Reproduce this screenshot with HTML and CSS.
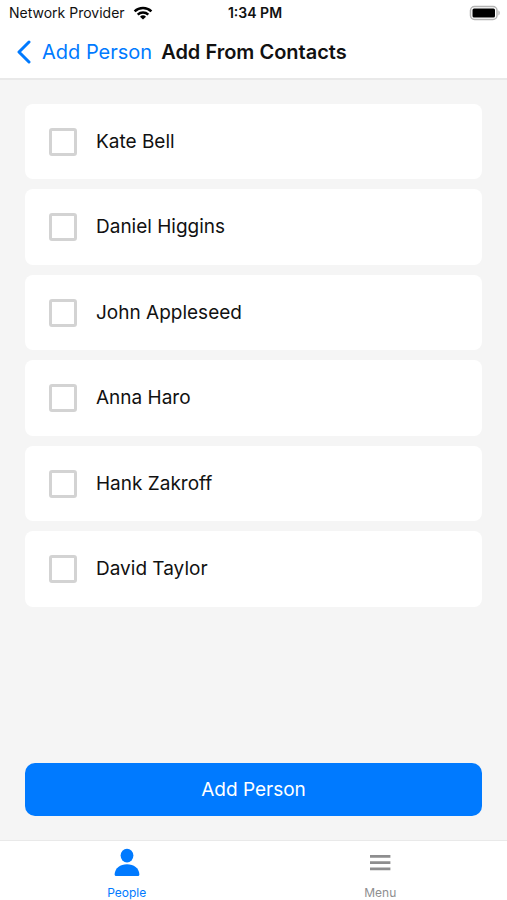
FILE: index.html
```html
<!DOCTYPE html>
<html lang="en">
<head>
<meta charset="utf-8">
<meta name="viewport" content="width=device-width, initial-scale=1">
<title>Add From Contacts</title>
<link rel="stylesheet" href="styles.css">
</head>
<body>
<div class="app">
  <header class="header">
    <div class="status">
      <div class="carrier">
        <span>Network Provider</span>
        <svg class="wifi" viewBox="0 0 20 14" aria-hidden="true">
          <path d="M1.6 5.3a12.2 12.2 0 0 1 16.8 0" fill="none" stroke="currentColor" stroke-width="2.5"/>
          <path d="M4.7 8.6a7.6 7.6 0 0 1 10.6 0" fill="none" stroke="currentColor" stroke-width="2.4"/>
          <path d="M10 13.6 7 10.7a4.4 4.4 0 0 1 6 0z" fill="currentColor"/>
        </svg>
      </div>
      <time class="clock">1:34 PM</time>
      <svg class="battery" viewBox="0 0 32 16" aria-hidden="true">
        <rect x="1.500" y="1.500" width="26.500" height="13" rx="4" fill="#fff" stroke="#b4b4b4" stroke-width="1.5"/>
        <rect x="3.500" y="3.500" width="22.500" height="9" rx="1.500" fill="#000"/>
        <path d="M29.4 5.6c1.8.6 1.8 4.2 0 4.8z" fill="#b4b4b4"/>
      </svg>
    </div>
    <nav class="navbar">
      <a class="back" href="#">
        <svg class="chevron" viewBox="0 0 16 24" aria-hidden="true">
          <path d="M13 2 3 12l10 10" fill="none" stroke="currentColor" stroke-width="3" stroke-linecap="round" stroke-linejoin="round"/>
        </svg>
        <span>Add Person</span>
      </a>
      <h1 class="title">Add From Contacts</h1>
    </nav>
  </header>

  <main class="content">
    <div class="contacts">
      <label class="contact"><input class="check" type="checkbox"><span>Kate Bell</span></label>
      <label class="contact"><input class="check" type="checkbox"><span>Daniel Higgins</span></label>
      <label class="contact"><input class="check" type="checkbox"><span>John Appleseed</span></label>
      <label class="contact"><input class="check" type="checkbox"><span>Anna Haro</span></label>
      <label class="contact"><input class="check" type="checkbox"><span>Hank Zakroff</span></label>
      <label class="contact"><input class="check" type="checkbox"><span>David Taylor</span></label>
    </div>
    <button class="submit" type="button">Add Person</button>
  </main>

  <nav class="tabs">
    <a class="tab active" href="#">
      <svg class="tab-icon" viewBox="0 0 28 28" aria-hidden="true">
        <ellipse cx="14" cy="7.6" rx="6.4" ry="6.8" fill="currentColor"/>
        <path d="M3.2 28c-1 0-1.700-.7-1.600-1.800C2.200 20 7 16.200 14 16.200s11.800 3.800 12.400 10c.1 1.100-.6 1.800-1.600 1.800z" fill="currentColor"/>
      </svg>
      <span>People</span>
    </a>
    <a class="tab" href="#">
      <svg class="tab-icon" viewBox="0 0 28 28" aria-hidden="true">
        <path d="M4 8.400h20.400M4 14.600h20.400M4 20.800h20.400" fill="none" stroke="currentColor" stroke-width="2.800"/>
      </svg>
      <span>Menu</span>
    </a>
  </nav>
</div>
</body>
</html>
```
FILE: styles.css
```css
* {
  box-sizing: border-box;
}

body {
  margin: 0;
  font-family: Inter, "Liberation Sans", sans-serif;
  color: #111;
  background: #f5f5f5;
}

a {
  color: inherit;
  text-decoration: none;
}

svg {
  display: block;
}

.app {
  display: flex;
  flex-direction: column;
  min-height: 100vh;
}

.header {
  background: #fff;
  border-bottom: 2px solid #e9e9e9;
}

.status {
  display: grid;
  grid-template-columns: 1fr auto 1fr;
  align-items: center;
  height: 26px;
  padding: 0 6px 0 9px;
  font-size: 14px;
  line-height: 20px;
}

.carrier {
  display: flex;
  align-items: center;
  gap: 8px;
}

.wifi {
  width: 20px;
  height: 14px;
  color: #000;
}

.clock {
  font-weight: 600;
}

.battery {
  justify-self: end;
  width: 32px;
  height: 16px;
}

.navbar {
  display: flex;
  align-items: center;
  gap: 9px;
  height: 52px;
  padding: 0 16px;
  font-size: 20px;
  line-height: 28px;
  white-space: nowrap;
}

.back {
  display: flex;
  align-items: center;
  gap: 10px;
  color: #007aff;
}

.chevron {
  width: 16px;
  height: 24px;
}

.title {
  margin: 0;
  font-size: 20px;
  font-weight: 600;
}

.content {
  flex: 1;
  display: flex;
  flex-direction: column;
  justify-content: space-between;
  gap: 24px;
  padding: 24px 25px;
}

.contacts {
  display: grid;
  grid-auto-rows: 75px 76px;
  gap: 10px;
}

.contact {
  display: flex;
  align-items: center;
  gap: 19px;
  padding: 0 24px;
  border-radius: 8px;
  background: #fff;
  font-size: 19px;
  line-height: 28px;
}

.check {
  appearance: none;
  width: 28px;
  height: 28px;
  margin: 0;
  border: 3px solid #d3d3d3;
  border-radius: 3px;
  background: #fff;
}

.check:checked {
  border-color: #007aff;
  background: #007aff;
}

.submit {
  height: 53px;
  border: 0;
  border-radius: 10px;
  background: #007aff;
  color: #fff;
  font: inherit;
  font-size: 19px;
  line-height: 28px;
}

.tabs {
  display: grid;
  grid-template-columns: 1fr 1fr;
  height: 60px;
  border-top: 1px solid #e9e9e9;
  background: #fff;
}

.tab {
  display: flex;
  flex-direction: column;
  align-items: center;
  gap: 8px;
  padding-top: 7px;
  color: #8e8e8f;
  font-size: 12px;
  line-height: 18px;
}

.tab.active {
  color: #007aff;
}

.tab-icon {
  width: 28px;
  height: 28px;
}
```
